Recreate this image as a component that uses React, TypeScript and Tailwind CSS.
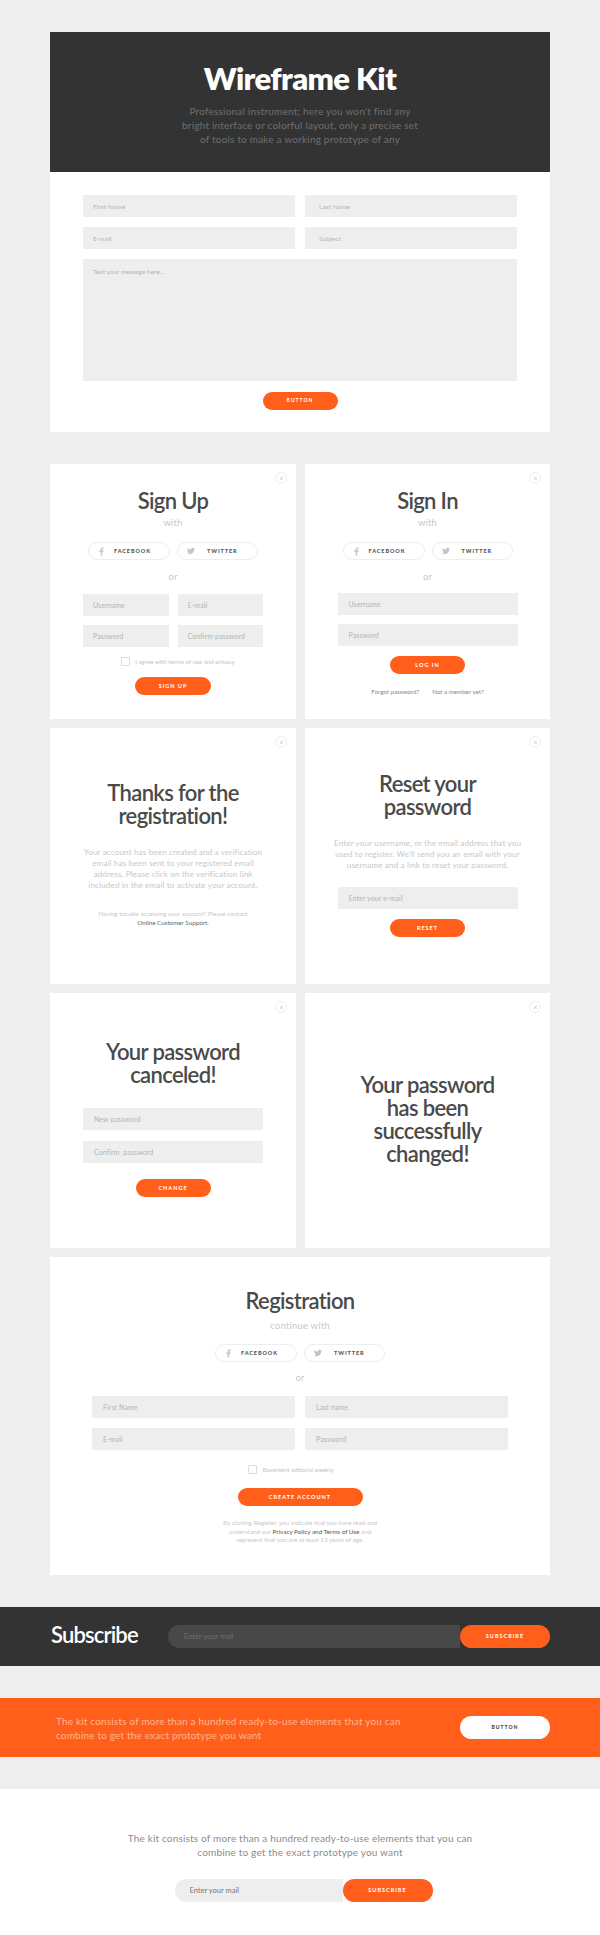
import React from 'react';
import { X } from 'lucide-react';
import { FaFacebookF, FaTwitter } from 'react-icons/fa';

const Field = ({ placeholder, size = 'text-[7px]', className = '' }: { placeholder: string; size?: string; className?: string }) => (
  <input
    readOnly
    placeholder={placeholder}
    className={`h-[22px] w-full min-w-0 bg-[#eeeeee] tracking-[0.1px] outline-none placeholder:text-[#b4b4b4] ${size} ${className}`}
  />
);

const Pill = ({ label, size = 'text-[5.5px]', className = '' }: { label: string; size?: string; className?: string }) => (
  <button className={`flex items-center justify-center rounded-full bg-[#ff5f1a] font-bold tracking-[1px] text-white ${size} ${className}`}>
    {label}
  </button>
);

const CloseButton = () => (
  <span className="absolute top-[8px] right-[9px] flex size-[12px] items-center justify-center rounded-full border border-[#eeeeee]">
    <X size={5} strokeWidth={2} className="text-[#999999]" />
  </span>
);

const Title = ({ children }: { children: React.ReactNode }) => (
  <h2 className="text-center text-[22px] leading-[23px] font-semibold tracking-[-0.65px] text-[#4a4a4a]">{children}</h2>
);

const Muted = ({ children, className = '' }: { children: React.ReactNode; className?: string }) => (
  <p className={`text-center text-[9.5px] leading-[12px] tracking-[0.2px] text-[#c8c8c8] ${className}`}>{children}</p>
);

const Paragraph = ({ children, className = '' }: { children: React.ReactNode; className?: string }) => (
  <p className={`text-center text-[8.2px] leading-[11px] tracking-[0.1px] text-[#c8c8c8] ${className}`}>{children}</p>
);

const Socials = ({ className = '' }: { className?: string }) => (
  <div className={`flex gap-[7px] ${className}`}>
    <button className="flex h-[18px] w-[82px] items-center rounded-full border border-[#eeeeee] pl-[10px] text-[5.5px] font-black tracking-[0.9px] text-[#555555]">
      <FaFacebookF size={9} className="w-[5px] text-[#c4c4c4]" />
      <span className="ml-[10px]">FACEBOOK</span>
    </button>
    <button className="flex h-[18px] w-[81px] items-center rounded-full border border-[#eeeeee] pl-[9px] text-[5.5px] font-black tracking-[0.9px] text-[#555555]">
      <FaTwitter size={8} className="text-[#c4c4c4]" />
      <span className="ml-[12px]">TWITTER</span>
    </button>
  </div>
);

const Check = ({ label, className = '' }: { label: string; className?: string }) => (
  <div className={`flex items-center gap-[5px] ${className}`}>
    <span className="size-[9px] rounded-[1px] border border-[#dddddd]" />
    <span className="text-[6.2px] leading-[9px] text-[#c4c4c4]">{label}</span>
  </div>
);

const Card = ({ children, close = true, className = '' }: { children: React.ReactNode; close?: boolean; className?: string }) => (
  <div className={`relative flex flex-col items-center bg-white ${className}`}>
    {close && <CloseButton />}
    {children}
  </div>
);

const App = () => {
  return (
    <div className="h-[1935px] w-[600px] overflow-hidden bg-[#eeeeee] pt-[32px] font-['Lato',sans-serif]">
      <div className="mx-[50px] w-[500px]">
        <div className="bg-white">
          <div className="h-[140px] bg-[#333333] pt-[28px] text-center">
            <h1 className="text-[31px] leading-[36px] font-extrabold tracking-[-0.6px] text-white">Wireframe Kit</h1>
            <p className="mt-[8px] text-[10px] leading-[14px] tracking-[0.2px] text-[#6f6f6f]">
              Professional instrument; here you won't find any
              <br />
              bright interface or colorful layout, only a precise set
              <br />
              of tools to make a working prototype of any
            </p>
          </div>
          <div className="flex h-[260px] flex-col items-center px-[33px] pt-[23px]">
            <div className="grid w-full grid-cols-2 gap-[10px]">
              <Field size="text-[6.5px]" placeholder="First Name" className="px-[10px]" />
              <Field size="text-[6.5px]" placeholder="Last Name" className="px-[14px]" />
              <Field size="text-[6.5px]" placeholder="E-mail" className="px-[10px]" />
              <Field size="text-[6.5px]" placeholder="Subject" className="px-[14px]" />
            </div>
            <textarea
              readOnly
              placeholder="Text your message here..."
              className="mt-[10px] h-[122px] w-full resize-none bg-[#eeeeee] px-[10px] py-[8px] text-[6.5px] outline-none placeholder:text-[#b4b4b4]"
            />
            <Pill label="BUTTON" size="text-[5px]" className="mt-[11px] h-[18px] w-[75px]" />
          </div>
        </div>

        <div className="mt-[32px] grid grid-cols-[246px_245px] gap-x-[9px] gap-y-[9px]">
          <Card className="h-[255px] pt-[25px]">
            <Title>Sign Up</Title>
            <Muted className="mt-[5px]">with</Muted>
            <Socials className="mt-[13px]" />
            <Muted className="mt-[11px]">or</Muted>
            <div className="mt-[11px] grid w-[180px] grid-cols-2 gap-[9px]">
              <Field placeholder="Username" className="px-[10px]" />
              <Field placeholder="E-mail" className="px-[10px]" />
              <Field placeholder="Password" className="px-[10px]" />
              <Field placeholder="Confirm password" className="px-[10px]" />
            </div>
            <Check label="I agree with terms of use and privacy" className="mt-[10px] ml-[10px]" />
            <Pill label="SIGN UP" className="mt-[11px] h-[18px] w-[76px]" />
          </Card>

          <Card className="h-[255px] pt-[25px]">
            <Title>Sign In</Title>
            <Muted className="mt-[5px]">with</Muted>
            <Socials className="mt-[13px]" />
            <Muted className="mt-[11px]">or</Muted>
            <div className="mt-[10px] flex w-[180px] flex-col gap-[9px]">
              <Field placeholder="Username" className="px-[11px]" />
              <Field placeholder="Password" className="px-[11px]" />
            </div>
            <Pill label="LOG IN" className="mt-[10px] h-[18px] w-[75px]" />
            <div className="mt-[13px] flex gap-[13px] text-[6.2px] leading-[10px] text-[#888888]">
              <span>Forgot password?</span>
              <span>Not a member yet?</span>
            </div>
          </Card>

          <Card className="h-[256px] pt-[53px]">
            <Title>
              Thanks for the
              <br />
              registration!
            </Title>
            <Paragraph className="mt-[20px]">
              Your account has been created and a verification
              <br />
              email has been sent to your registered email
              <br />
              address. Please click on the verification link
              <br />
              included in the email to activate your account.
            </Paragraph>
            <p className="mt-[18px] text-center text-[6.25px] leading-[9px] text-[#c8c8c8]">
              Having trouble accessing your account? Please contact
              <br />
              <span className="text-[#666666]">Online Customer Support.</span>
            </p>
          </Card>

          <Card className="h-[256px] pt-[44px]">
            <Title>
              Reset your
              <br />
              password
            </Title>
            <Paragraph className="mt-[20px]">
              Enter your username, or the email address that you
              <br />
              used to register. We'll send you an email with your
              <br />
              username and a link to reset your password.
            </Paragraph>
            <div className="mt-[12px] w-[180px]">
              <Field placeholder="Enter your e-mail" className="px-[11px]" />
            </div>
            <Pill label="RESET" className="mt-[10px] h-[18px] w-[75px]" />
          </Card>

          <Card className="h-[255px] pt-[47px]">
            <Title>
              Your password
              <br />
              canceled!
            </Title>
            <div className="mt-[22px] flex w-[180px] flex-col gap-[11px]">
              <Field placeholder="New password" className="px-[11px]" />
              <Field placeholder="Confirm  password" className="px-[11px]" />
            </div>
            <Pill label="CHANGE" className="mt-[16px] h-[18px] w-[75px]" />
          </Card>

          <Card className="h-[255px] pt-[80px]">
            <Title>
              Your password
              <br />
              has been
              <br />
              successfully
              <br />
              changed!
            </Title>
          </Card>

          <Card close={false} className="col-span-2 h-[318px] pt-[32px]">
            <Title>Registration</Title>
            <Muted className="mt-[8px]">continue with</Muted>
            <Socials className="mt-[12px]" />
            <Muted className="mt-[10px]">or</Muted>
            <div className="mt-[12px] grid w-[416px] grid-cols-2 gap-[10px]">
              <Field placeholder="First Name" className="px-[11px]" />
              <Field placeholder="Last name" className="px-[11px]" />
              <Field placeholder="E-mail" className="px-[11px]" />
              <Field placeholder="Password" className="px-[11px]" />
            </div>
            <Check label="Basement aditorial weekly" className="mt-[15px] mr-[18px]" />
            <Pill label="CREATE ACCOUNT" className="mt-[14px] h-[18px] w-[125px]" />
            <p className="mt-[13px] text-center text-[6.3px] leading-[8.5px] text-[#c8c8c8]">
              By clicking Register, you indicate that you have read and
              <br />
              understand our <span className="text-[#555555]">Privacy Policy and Terms of Use</span> and
              <br />
              represent that you are at least 13 years of age.
            </p>
          </Card>
        </div>
      </div>

      <div className="mt-[32px] flex h-[59px] items-center bg-[#333333] pr-[50px] pl-[51px]">
        <h3 className="w-[117px] -translate-y-[2px] text-[22px] leading-[26px] font-semibold tracking-[-0.85px] text-white">Subscribe</h3>
        <div className="flex flex-1">
          <input
            readOnly
            placeholder="Enter your mail"
            className="h-[23px] min-w-0 flex-1 rounded-l-full bg-[#484848] pl-[16px] text-[7.5px] outline-none placeholder:text-[#6f6f6f]"
          />
          <Pill label="SUBSCRIBE" className="h-[23px] w-[90px]" />
        </div>
      </div>

      <div className="mt-[32px] flex h-[59px] items-center justify-between bg-[#ff5f1a] pr-[50px] pl-[56px]">
        <p className="text-[10px] leading-[14px] tracking-[0.18px] text-[#ffb48f]">
          The kit consists of more than a hundred ready-to-use elements that you can
          <br />
          combine to get the exact prototype you want
        </p>
        <button className="flex h-[23px] w-[90px] items-center justify-center rounded-full bg-white text-[5px] font-black tracking-[1px] text-[#444444]">
          BUTTON
        </button>
      </div>

      <div className="mt-[32px] flex h-[146px] flex-col items-center bg-white pt-[42px]">
        <p className="text-center text-[10px] leading-[14px] tracking-[0.18px] text-[#8c8c8c]">
          The kit consists of more than a hundred ready-to-use elements that you can
          <br />
          combine to get the exact prototype you want
        </p>
        <div className="mt-[20px] ml-[7px] flex w-[258px]">
          <input
            readOnly
            placeholder="Enter your mail"
            className="h-[23px] min-w-0 flex-1 rounded-l-full bg-[#eeeeee] pl-[15px] text-[7.5px] outline-none placeholder:text-[#777777]"
          />
          <Pill label="SUBSCRIBE" className="h-[23px] w-[90px]" />
        </div>
      </div>
    </div>
  );
};

export default App;
